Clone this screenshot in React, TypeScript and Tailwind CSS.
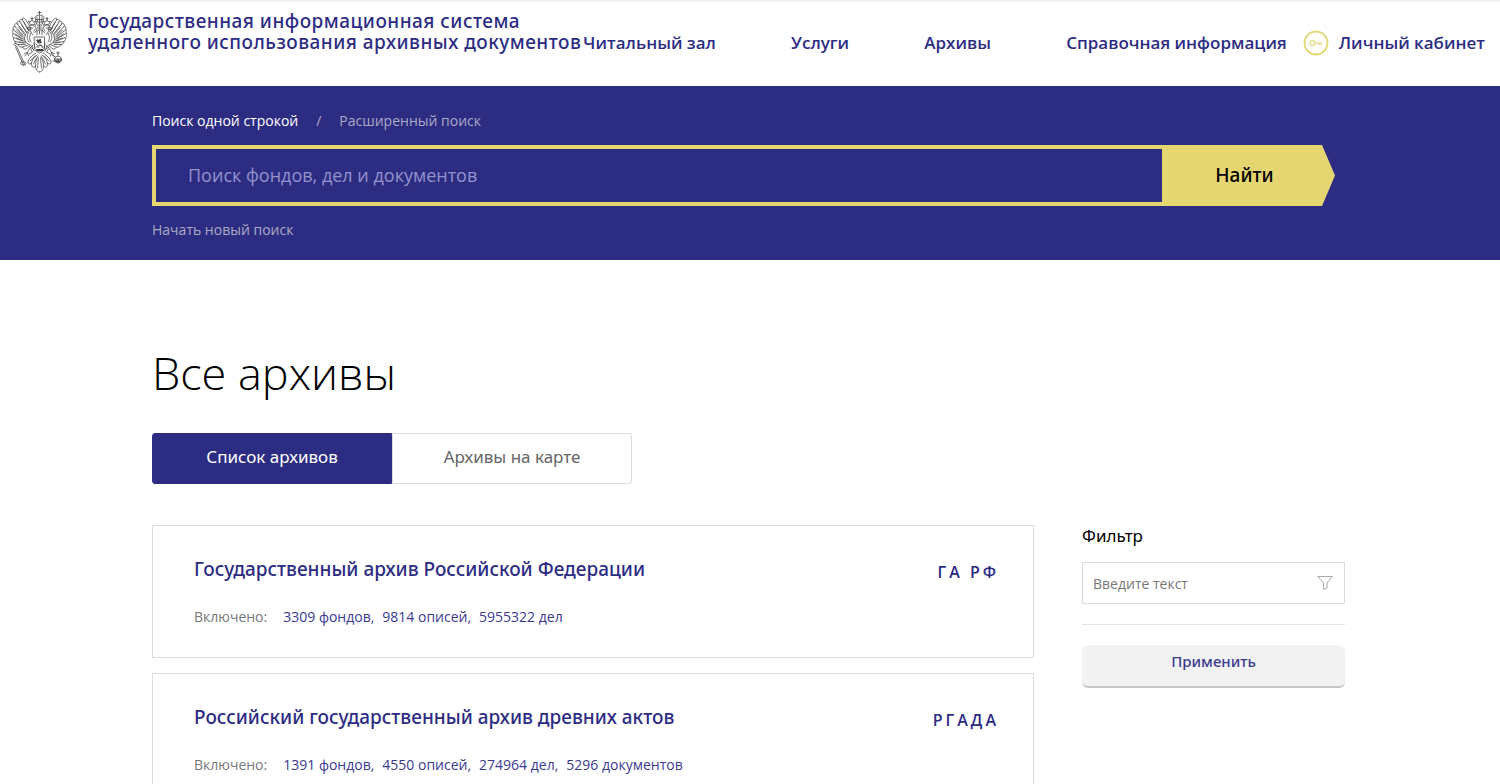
import { useState } from 'react'

const NAV_LINKS = ['Читальный зал', 'Услуги', 'Архивы', 'Справочная информация']

const TABS = ['Список архивов', 'Архивы на карте']

const ARCHIVES = [
  {
    name: 'Государственный архив Российской Федерации',
    code: 'ГА РФ',
    included: ['3309 фондов', '9814 описей', '5955322 дел'],
  },
  {
    name: 'Российский государственный архив древних актов',
    code: 'РГАДА',
    included: ['1391 фондов', '4550 описей', '274964 дел', '5296 документов'],
  },
]

function EagleHalf() {
  return (
    <>
      {/* wing feathers */}
      <path d="M19 18C17 14 15 10 12.500 7.500C11 6.500 9.500 7.500 10.500 9L16 19" />
      <path d="M10.500 9C8.500 7.500 7 9 8 11L14 20.500M8 11C6 9 4.500 11 5.500 13L12.500 22" />
      <path d="M5.500 13C3.500 11.500 2 13.500 3 15.500L11 24M3 15.500C1 14.500 .5 17 1.500 19L10.500 26" />
      <path d="M1.500 19C0 18.500-.2 21 1 22.500L10 28M1 22.500C-.5 22.500 0 25 1.500 26.500L10.500 30" />
      <path d="M1.500 26.500C.5 27 1.500 29.500 3 30.500L11.500 32M3 30.500C2.500 31.500 4 33.500 6 33.500L13 33.500" />
      <path d="M6 33.500C6 35.500 8.500 36.500 10.500 36L16 34M10.500 36C11 38 13.500 38.500 15 37.500L18.500 34" />
      <path d="M12 11L17 20M9.500 13.500L15 22M6.500 16L13 24M4.500 19L12 26.500M3.500 23L12 28.500M4.500 27L13 30.500M7 31L14 32" />
      <path d="M19 18C15 20 12.500 24 12.500 28C13 31 15 33 18 34M17 21C14.500 24 14.500 28 17 31M19 22C17 25 17 28 19 31" />
      {/* head, beak and small crown */}
      <path d="M25 24C25.500 20 24.500 16 21.500 14.500C18.500 13.500 16.500 15.500 15 18L18.500 18C18 20 19 22 21 24" />
      <path d="M15.500 17L19 16.500M20 17H21M23 18L22 20M24 20L22.500 22" />
      <path d="M18 13L16.500 10L18.500 11L20 8.500L21.500 11L23.500 10L22.500 13.500ZM20 6.500V8.500M19 7.500H21" />
      {/* leg */}
      <path d="M21 34C18 36 17 39 15.500 41.500L12.500 42.500M18.500 38L20.500 41L17 43M15.500 41.500L13 45M15.500 41.500L16.500 45" />
      <path d="M20 35L22 40M18 36L21 38M22 32L23 37" />
      {/* tail */}
      <path d="M24 42C21 44 18 46 16 50C15.500 53 18 54 19.500 52C19 56 22 57.500 23.500 55C23.500 58.500 25.500 61 27.500 61" />
      <path d="M19.500 52C20 49 22 46 25 44M23.500 55C23.500 51 24.500 48 26 45M18 50L23 45M21.500 53L24.500 47M25.500 57L26.500 47" />
    </>
  )
}

function Emblem() {
  return (
    <svg
      viewBox="0 0 55 62"
      className="h-[62px] w-[55px] shrink-0"
      fill="none"
      stroke="#4a4a4a"
      strokeWidth="0.8"
      strokeLinecap="round"
      strokeLinejoin="round"
      aria-hidden="true"
    >
      <EagleHalf />
      <g transform="translate(55 0) scale(-1 1)">
        <EagleHalf />
      </g>
      {/* main crown with ribbons */}
      <path d="M27.500 0V4M26 1.500H29M24 10.500L23 6.500C24 4.500 26 4 27.500 4C29 4 31 4.500 32 6.500L31 10.500ZM25.500 10L25 6M27.500 10V5M29.500 10L30 6M24 8.500H31" />
      <path d="M25 11C25 13 23.500 13 23.500 15M30 11C30 13 31.500 13 31.500 15M27.500 11V23M26 13V20M29 13V20" />
      {/* shield with the rider */}
      <path d="M22.500 26H32.500V37C32.500 40 30 40.500 27.500 42C25 40.500 22.500 40 22.500 37Z" />
      <path
        d="M25 28L27 29L28 27.500L29.500 29L28.500 30L30 31L29 32.500L27.500 31.500L26 32.500L25 31ZM23.500 39.500L24.500 38H31L32 39.500L27.500 40.500Z"
        fill="#3f3f3f"
        stroke="none"
      />
      <path d="M24 29L31 37M24 33L26 35L29 34L31 35.500M24.500 36H27" />
      {/* sceptre */}
      <path d="M2.500 34L4.500 35L13 54M3.500 36L11.500 54M2 33L4 32.500M9 51C11 50 13.500 50.500 14 52.500L12 54.500L9.500 53.500Z" />
      {/* orb */}
      <circle cx="46" cy="48.500" r="3.500" />
      <path d="M46 45V40.500M44.500 42H47.500M42.500 48H49.500M46 48V52M40 44L43 46M41 50H44" />
      <path d="M43 49.500A3.500 3.500 0 0 0 49 49.500Z" fill="#4a4a4a" />
    </svg>
  )
}

function KeyBadge() {
  return (
    <svg
      viewBox="0 0 26 26"
      className="h-[26px] w-[26px] shrink-0"
      fill="none"
      stroke="#e5d874"
      aria-hidden="true"
    >
      <circle cx="13" cy="13" r="11.500" strokeWidth="1.800" />
      <circle cx="9.500" cy="13" r="2.500" strokeWidth="1.200" />
      <path d="M12 13H19M16 13V15M18.300 13V15" strokeWidth="1.200" />
    </svg>
  )
}

function FunnelIcon() {
  return (
    <svg
      viewBox="0 0 16 15"
      className="pointer-events-none absolute right-3 top-1/2 h-[15px] w-4 -translate-y-1/2"
      fill="none"
      stroke="#a8a8a8"
      strokeLinejoin="round"
      aria-hidden="true"
    >
      <path d="M.7 1H15.300L10 7.500V12.500L6.500 14V7.500Z" />
    </svg>
  )
}

function Header() {
  return (
    <header className="flex h-[86px] items-start border-t-2 border-[#efefef] bg-white pl-3 pr-[15px] text-[#2d2c83]">
      <a href="#" className="flex shrink-0 gap-[21px] pt-[9px]">
        <Emblem />
        <span className="whitespace-nowrap font-['Noto_Sans',sans-serif] text-[19px] font-medium leading-[21px] tracking-wide">
          Государственная информационная система
          <br />
          удаленного использования архивных документов
        </span>
      </a>
      <nav className="flex flex-1 items-center justify-between whitespace-nowrap pl-0.5 pt-7 text-[17px] font-semibold leading-[26px]">
        {NAV_LINKS.map((label) => (
          <a key={label} href="#">
            {label}
          </a>
        ))}
      </nav>
      <a
        href="#"
        className="ml-4 flex shrink-0 items-center gap-[10px] whitespace-nowrap pt-7 text-[17px] font-semibold leading-[26px]"
      >
        <KeyBadge />
        Личный кабинет
      </a>
    </header>
  )
}

function SearchBand() {
  return (
    <section className="bg-[#2d2c83] pb-[19px] pt-6">
      <div className="mx-auto max-w-[1196px] pr-[13px]">
        <div className="flex text-[14px] leading-[22px] text-[#abaac4]">
          <a href="#" className="text-white">
            Поиск одной строкой
          </a>
          <span className="px-[18px]">/</span>
          <a href="#">Расширенный поиск</a>
        </div>
        <form className="mt-[13px] flex h-[61px]" onSubmit={(e) => e.preventDefault()}>
          <input
            type="search"
            aria-label="Поиск"
            placeholder="Поиск фондов, дел и документов"
            className="min-w-0 flex-1 border-4 border-r-0 border-[#e5d672] bg-transparent pl-8 text-[18px] text-white outline-none placeholder:text-[#9392cb]"
          />
          <button
            type="submit"
            className="w-[173px] bg-[#e5d672] pr-2 font-['Noto_Sans',sans-serif] text-[19px] font-medium text-black [clip-path:polygon(0_0,160px_0,100%_50%,160px_100%,0_100%)]"
          >
            Найти
          </button>
        </form>
        <a href="#" className="mt-[13px] block w-fit text-[14px] leading-[22px] text-[#abaac4]">
          Начать новый поиск
        </a>
      </div>
    </section>
  )
}

function Filter() {
  return (
    <aside>
      <form onSubmit={(e) => e.preventDefault()}>
        <label
          htmlFor="filter"
          className="block font-['Noto_Sans',sans-serif] text-[17px] leading-[22px] text-black"
        >
          Фильтр
        </label>
        <div className="relative mt-[15px]">
          <input
            id="filter"
            type="text"
            placeholder="Введите текст"
            className="block h-[42px] w-full border border-[#dcdcdc] pl-[10px] pr-10 text-[14px] outline-none placeholder:text-[#777777]"
          />
          <FunnelIcon />
        </div>
        <hr className="my-5 border-[#e4e4e4]" />
        <button
          type="submit"
          className="h-[43px] w-full rounded-md border-b-2 border-[#c6c6c6] bg-[#f2f2f2] pb-2 font-['Noto_Sans',sans-serif] text-[15px] font-medium text-[#3b3a91]"
        >
          Применить
        </button>
      </form>
    </aside>
  )
}

export default function App() {
  const [tab, setTab] = useState(TABS[0])

  return (
    <div className="h-screen overflow-hidden bg-white font-['Open_Sans',sans-serif]">
      <Header />
      <SearchBand />
      <main className="mx-auto max-w-[1196px] pr-[3px]">
        <h1 className="pt-[79px] text-[45px] font-light leading-[68px] text-black">Все архивы</h1>

        <div className="mt-[26px] flex font-['Noto_Sans',sans-serif] text-[17px]">
          {TABS.map((label) => (
            <button
              key={label}
              type="button"
              onClick={() => setTab(label)}
              className={
                tab === label
                  ? 'h-[51px] w-60 border border-[#2d2c83] bg-[#2d2c83] pb-1 text-white first:rounded-l-[3px] last:rounded-r-[3px]'
                  : 'h-[51px] w-60 border border-[#dcdcdc] bg-white pb-1 text-[#666666] first:rounded-l-[3px] last:rounded-r-[3px]'
              }
            >
              {label}
            </button>
          ))}
        </div>

        <div className="mt-[41px] grid grid-cols-[minmax(0,1fr)_263px] gap-12">
          <div className="space-y-[15px]">
            {ARCHIVES.map((archive) => (
              <article
                key={archive.code}
                className="h-[133px] border border-[#dcdcdc] pl-[41px] pr-[34px] pt-[29px]"
              >
                <div className="flex justify-between text-[#2d2c83]">
                  <h2 className="font-['Noto_Sans',sans-serif] text-[19px] font-medium leading-7">
                    <a href="#">{archive.name}</a>
                  </h2>
                  <span className="pt-[5px] text-[16px] font-semibold leading-6 tracking-[3px]">
                    {archive.code}
                  </span>
                </div>
                <p className="mt-[22px] flex text-[14px] leading-[22px] text-[#3b3a91]">
                  <span className="mr-4 text-[#777777]">Включено:</span>
                  {archive.included.map((item, i) => (
                    <span key={item} className="mr-2">
                      <a href="#">{item}</a>
                      {i < archive.included.length - 1 && ','}
                    </span>
                  ))}
                </p>
              </article>
            ))}
          </div>
          <Filter />
        </div>
      </main>
    </div>
  )
}
